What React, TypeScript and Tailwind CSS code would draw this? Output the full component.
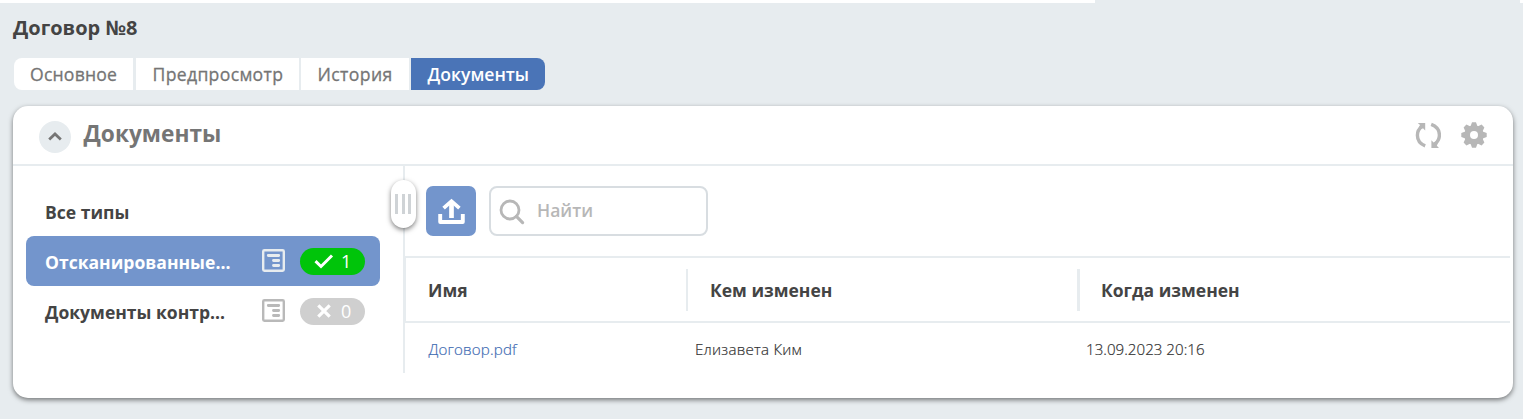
import React from "react";

type DocType = { label: string; count?: number; active?: boolean };

const docTypes: DocType[] = [
  { label: "Все типы" },
  { label: "Отсканированные...", count: 1, active: true },
  { label: "Документы контр...", count: 0 },
];

function FormIcon() {
  return (
    <svg width="23" height="23" viewBox="0 0 23 23" fill="none" stroke="currentColor" strokeWidth="2.4">
      <rect x="1.2" y="1.2" width="20.6" height="20.6" rx="1.2" />
      <path d="M6.3 6.5H16.7M11.5 11.5H16.7M11.5 16.5H16.7" strokeWidth="2.9" strokeLinecap="round" />
    </svg>
  );
}

function CheckIcon() {
  return (
    <svg width="20" height="15" viewBox="0 0 20 15" fill="none" stroke="currentColor" strokeWidth="3">
      <path d="M1.5 7.2L7 12.5L18 1.5" />
    </svg>
  );
}

function CrossIcon() {
  return (
    <svg width="14" height="14" viewBox="0 0 14 14" fill="none" stroke="currentColor" strokeWidth="3.2">
      <path d="M1.3 1.3L12.7 12.7M12.7 1.3L1.3 12.7" />
    </svg>
  );
}

function RefreshIcon() {
  return (
    <svg width="26" height="26" viewBox="0 0 26 26" fill="none">
      <path d="M10.2 23.8C5.4 22 2.4 18 2.4 13.2C2.4 9.6 4.2 6.4 7 4.3" stroke="currentColor" strokeWidth="3.4" />
      <path d="M16.2 2.4C21 4.2 24.4 8.2 24.4 13C24.4 16.6 22.8 19.8 20 21.9" stroke="currentColor" strokeWidth="3.4" />
      <path d="M2.8 1H10.2V8.4L8 6.2L6 7L4 5L5 3Z" fill="currentColor" />
      <path d="M24 26H16.4V18.2L18.6 20.4L20.6 19.6L22.8 21.6L21.8 23.8Z" fill="currentColor" />
    </svg>
  );
}

function GearIcon() {
  return (
    <svg width="26" height="26" viewBox="-13 -13 26 26" fill="currentColor">
      {[0, 45, 90, 135].map((a) => (
        <path key={a} transform={`rotate(${a})`} d="M-3.7 -8L-2 -12.7H2L3.7 -8V8L2 12.7H-2L-3.7 8Z" />
      ))}
      <circle r="9.7" />
      <circle r="4" fill="#fff" />
    </svg>
  );
}

function UploadIcon() {
  return (
    <svg width="27" height="26" viewBox="0 0 27 26" fill="none" stroke="currentColor">
      <path d="M13.5 20V4.5" strokeWidth="4.7" />
      <path d="M5.6 10.2L13.5 3.2L21.4 10.2" strokeWidth="3.8" />
      <path d="M2.2 16V24H24.8V16" strokeWidth="3.9" strokeLinejoin="round" />
    </svg>
  );
}

function SearchIcon() {
  return (
    <svg width="26" height="26" viewBox="0 0 26 26" fill="none" stroke="currentColor" strokeWidth="2.8">
      <circle cx="11" cy="11" r="9" />
      <path d="M17.4 17.4L23.6 23.6" strokeWidth="3.2" strokeLinecap="round" />
    </svg>
  );
}

function Tabs() {
  return (
    <nav className="ml-[14px] mt-[15px] flex h-8 gap-[2px] text-[17.6px] leading-8 font-medium text-[#757575]">
      <div className="mr-px w-[119px] rounded-l-[8px] bg-white pl-4 tracking-[0.2px] [-webkit-text-stroke:0.3px]">
        Основное
      </div>
      <div className="w-[163px] bg-white pl-[16.5px] tracking-[0.33px] [-webkit-text-stroke:0.3px]">Предпросмотр</div>
      <div className="w-[108px] bg-white pl-[16.5px] tracking-[0.4px] [-webkit-text-stroke:0.3px]">История</div>
      <div className="w-[134px] rounded-r-[8px] bg-[#4a74b7] pl-[16.5px] font-semibold text-white">Документы</div>
    </nav>
  );
}

function Sidebar() {
  return (
    <aside className="w-[390px] shrink-0 pt-5 pl-[13px]">
      {docTypes.map((t) => (
        <div
          key={t.label}
          className={`flex h-[50px] w-[354px] items-center rounded-[8px] pl-[19px] pr-[15px] text-[17.55px] ${
            t.active ? "bg-[#7395cc] font-bold text-white" : "font-bold text-[#444]"
          }`}
        >
          <span className="w-[217px] whitespace-nowrap pt-[3px]">{t.label}</span>
          {t.count !== undefined && (
            <>
              <span className={t.active ? "mb-[2px] text-[#e7ecef]" : "mb-[2px] text-[#b9b9b9]"}>
                <FormIcon />
              </span>
              <span
                className={`ml-auto flex h-[27px] w-[65px] items-center rounded-full text-lg font-normal text-white ${
                  t.active ? "bg-[#00c40a]" : "bg-[#cfcfcf]"
                }`}
              >
                <span className="flex w-[41px] justify-center pl-[7px]">{t.count ? <CheckIcon /> : <CrossIcon />}</span>
                <span>{t.count}</span>
              </span>
            </>
          )}
        </div>
      ))}
    </aside>
  );
}

function DocumentsTable() {
  return (
    <div className="mr-[3px] mt-5">
      <div className="flex h-[67px] items-center border-y-2 border-l border-[#e7ecef] text-[17.5px] font-bold text-[#444]">
        <div className="flex h-[42px] w-[282px] items-center border-r-2 border-[#e7ecef] pt-[2px] pl-[22px]">Имя</div>
        <div className="flex h-[42px] w-[392px] items-center border-r-3 border-[#e7ecef] pt-[2px] pl-[22px]">
          Кем изменен
        </div>
        <div className="pt-[2px] pl-[21px]">Когда изменен</div>
      </div>
      <div className="flex h-[50px] items-center pt-[3px] text-[15.1px] font-light text-[#333] [-webkit-text-stroke:0.2px]">
        <div className="w-[290px] pl-[23.5px] tracking-[0.17px] text-[#3f6cb3]">Договор.pdf</div>
        <div className="w-[391px] tracking-[0.25px]">Елизавета Ким</div>
        <div className="tracking-[0.03px]">13.09.2023 20:16</div>
      </div>
    </div>
  );
}

export default function App() {
  return (
    <main className="h-[419px] w-[1523px] overflow-hidden bg-[#e7ecef] font-['Open_Sans','Noto_Sans',sans-serif]">
      <div className="flex h-[3px] justify-between">
        <div className="w-[1095px] bg-white" />
        <div className="w-[3px] bg-white" />
      </div>
      <h1 className="ml-[13px] mt-[11px] h-[29px] text-xl leading-7 font-bold text-[#444]">Договор №8</h1>
      <Tabs />
      <section className="ml-[13px] mt-4 h-[292px] w-[1500px] rounded-[15px] bg-white shadow-[0_2px_5px_rgba(0,0,0,0.5)]">
        <header className="flex h-[60px] items-center border-b-2 border-[#e7ecef] pl-[26px] pr-[26px]">
          <button className="mt-[3px] flex size-8 items-center justify-center rounded-full bg-[#e7ecef]">
            <svg width="14" height="9" viewBox="0 0 14 9" fill="none" stroke="#757575" strokeWidth="2.8">
              <path d="M1.2 7.5L7 2L12.8 7.5" />
            </svg>
          </button>
          <h2 className="mb-[2px] ml-[12.5px] text-[22.7px] font-bold text-[#757575]">Документы</h2>
          <div className="ml-auto flex gap-5 text-[#b7b7b7]">
            <RefreshIcon />
            <GearIcon />
          </div>
        </header>
        <div className="flex">
          <Sidebar />
          <div className="relative h-[207px] w-[2px] bg-[#e7ecef]">
            <div className="absolute -left-3 top-[14px] flex h-12 w-[25px] items-center gap-[3.5px] rounded-full bg-white pl-1 shadow-[0_2px_5px_rgba(0,0,0,0.5)]">
              <i className="h-5 w-[3px] bg-[#cfd3d6]" />
              <i className="h-5 w-[3px] bg-[#cfd3d6]" />
              <i className="h-5 w-[3px] bg-[#cfd3d6]" />
            </div>
          </div>
          <div className="min-w-0 flex-1 pt-5">
            <div className="flex gap-[13px] pl-[21px]">
              <button className="flex size-[50px] items-center justify-center rounded-[7px] bg-[#7395cc] text-white">
                <UploadIcon />
              </button>
              <div className="flex h-[50px] w-[219px] items-center rounded-[8px] border-2 border-[#d8dde1] pl-[8px] text-[17.5px] font-semibold text-[#b7b7b7]">
                <span className="mt-[2px]">
                  <SearchIcon />
                </span>
                <span className="mb-[2px] ml-3">Найти</span>
              </div>
            </div>
            <DocumentsTable />
          </div>
        </div>
      </section>
    </main>
  );
}
